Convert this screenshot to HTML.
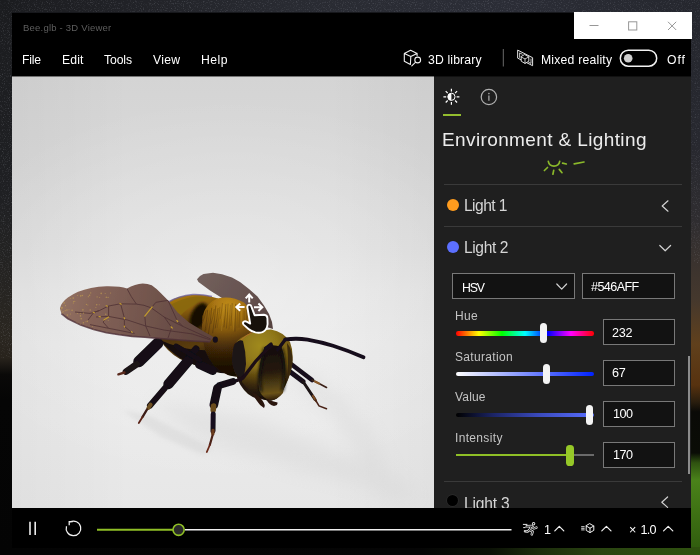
<!DOCTYPE html>
<html lang="en">
<head>
<meta charset="utf-8">
<title>Bee.glb - 3D Viewer</title>
<style>
html,body{margin:0;padding:0;}
body{width:700px;height:555px;position:relative;overflow:hidden;background:#1c1e23;font-family:"Liberation Sans",sans-serif;}
.a{position:absolute;}
.t{position:absolute;white-space:pre;line-height:1;will-change:transform;}
#desk-top{left:0;top:0;width:700px;height:13px;background:linear-gradient(90deg,#1b1c1f 0%,#212227 18%,#292b32 42%,#2b2d36 72%,#25272e 100%);}
#desk-left{left:0;top:0;width:13px;height:555px;background:linear-gradient(180deg,#1b1c1f 0%,#1f2023 35%,#252422 50%,#2a2620 60%,#28231c 64.5%,#0a0908 67.5%,#050505 72%,#040404 100%);}
#desk-right{left:690px;top:0;width:10px;height:555px;background:linear-gradient(180deg,#25272e 0%,#27282f 25%,#2f2d30 40%,#45382d 54%,#60401c 62%,#57320f 69.4%,#2a1e0e 72.4%,#0a0a07 74.2%,#0a0c06 81.6%,#2f5210 83.4%,#4a821a 86.5%,#3f7214 92%,#2f5a0e 100%);}
#desk-bottom{left:0;top:547px;width:700px;height:8px;background:linear-gradient(90deg,#040404 0%,#050505 60%,#0b1106 70%,#1c2d0c 77%,#2a4511 86%,#2f520f 100%);}
#win{left:12px;top:12px;width:679px;height:536px;background:#000;}
#caption{left:574px;top:12px;width:117.5px;height:27px;background:#fff;}
#view{left:12px;top:76px;width:422px;height:432px;overflow:hidden;background:
radial-gradient(ellipse 70% 45% at 52% 50%,rgba(255,255,255,.32) 0%,rgba(255,255,255,0) 100%),
linear-gradient(90deg,rgba(0,0,0,.035) 0%,rgba(0,0,0,0) 28%,rgba(0,0,0,0) 75%,rgba(0,0,0,.03) 100%),
linear-gradient(180deg,#d4d4d4 0%,#d9d9d9 22%,#dfdfdf 40%,#e5e5e5 50%,#e9e9e9 62%,#eaeaea 80%,#e7e7e7 100%);}
#panel{left:434px;top:76px;width:257px;height:432px;background:#1f1f1f;overflow:hidden;}
#bar{left:12px;top:508px;width:679px;height:40px;background:#000;}
.box{position:absolute;box-sizing:border-box;border:1px solid #787878;background:#121212;}
.div{position:absolute;height:1px;background:#3a3a3a;}
</style>
</head>
<body>
<div class="a" id="desk-top"></div>
<div class="a" id="desk-left"></div>
<div class="a" id="desk-right"></div>
<div class="a" id="desk-bottom"></div>
<svg class="a" style="left:0;top:0" width="700" height="555" viewBox="0 0 700 555">
<defs><filter id="stars" x="0" y="0" width="100%" height="100%"><feTurbulence type="fractalNoise" baseFrequency="0.85" numOctaves="2" seed="7"/><feColorMatrix type="matrix" values="0 0 0 0 0.85  0 0 0 0 0.88  0 0 0 0 1  1.6 0 0 0 -0.86"/></filter></defs>
<rect x="0" y="0" width="700" height="13" filter="url(#stars)" opacity="0.3"/>
<rect x="0" y="13" width="13" height="345" filter="url(#stars)" opacity="0.3"/>
<rect x="690" y="13" width="10" height="250" filter="url(#stars)" opacity="0.25"/>
</svg>
<div class="a" id="win"></div>
<div class="a" style="left:12px;top:12px;width:562px;height:1px;background:rgba(38,40,47,0.6)"></div>
<div class="a" id="caption"></div>
<div class="a" id="view">
<svg class="a" style="left:0;top:0" width="422" height="432" viewBox="12 76 422 432">
<defs>
<filter id="soft" x="-5%" y="-5%" width="110%" height="110%"><feGaussianBlur stdDeviation="0.55"/></filter>
<filter id="blur8" x="-30%" y="-30%" width="160%" height="160%"><feGaussianBlur stdDeviation="9"/></filter>
<filter id="blur15" x="-30%" y="-30%" width="160%" height="160%"><feGaussianBlur stdDeviation="1.6"/></filter>
<filter id="blur3" x="-30%" y="-30%" width="160%" height="160%"><feGaussianBlur stdDeviation="2.5"/></filter>
<linearGradient id="wingN" x1="60" y1="300" x2="213" y2="338" gradientUnits="userSpaceOnUse">
<stop offset="0" stop-color="#937262"/><stop offset="0.22" stop-color="#846257"/><stop offset="0.55" stop-color="#72554d"/><stop offset="1" stop-color="#5d423c"/>
</linearGradient>
<linearGradient id="wingF" x1="198" y1="276" x2="272" y2="325" gradientUnits="userSpaceOnUse">
<stop offset="0" stop-color="#72605c"/><stop offset="0.6" stop-color="#66524f"/><stop offset="1" stop-color="#564340"/>
</linearGradient>
<radialGradient id="thor" cx="229" cy="307" r="60" gradientUnits="userSpaceOnUse">
<stop offset="0" stop-color="#c4901c"/><stop offset="0.25" stop-color="#aa7612"/><stop offset="0.5" stop-color="#82560c"/><stop offset="0.78" stop-color="#503208"/><stop offset="1" stop-color="#2a1a06"/>
</radialGradient>
<linearGradient id="abd" x1="178" y1="296" x2="196" y2="364" gradientUnits="userSpaceOnUse">
<stop offset="0" stop-color="#a87810"/><stop offset="0.22" stop-color="#8a5e0e"/><stop offset="0.45" stop-color="#4a300a"/><stop offset="0.75" stop-color="#5a3c0c"/><stop offset="1" stop-color="#1c1206"/>
</linearGradient>
<radialGradient id="head" cx="260" cy="346" r="52" gradientUnits="userSpaceOnUse">
<stop offset="0" stop-color="#a08a1e"/><stop offset="0.35" stop-color="#8e7619"/><stop offset="0.65" stop-color="#6a5010"/><stop offset="1" stop-color="#241808"/>
</radialGradient>
<linearGradient id="clyp" x1="268" y1="345" x2="274" y2="401" gradientUnits="userSpaceOnUse">
<stop offset="0" stop-color="#120c0a"/><stop offset="0.48" stop-color="#261a10"/><stop offset="0.7" stop-color="#4c3c12"/><stop offset="0.86" stop-color="#6a5218"/><stop offset="1" stop-color="#241408"/>
</linearGradient>
<linearGradient id="headsh" x1="262" y1="368" x2="262" y2="401" gradientUnits="userSpaceOnUse">
<stop offset="0" stop-color="#1a1008" stop-opacity="0"/><stop offset="0.6" stop-color="#1a1008" stop-opacity="0.5"/><stop offset="1" stop-color="#140c06" stop-opacity="0.9"/>
</linearGradient>
<linearGradient id="thorsh" x1="215" y1="300" x2="235" y2="378" gradientUnits="userSpaceOnUse">
<stop offset="0" stop-color="#1a0e04" stop-opacity="0"/><stop offset="0.4" stop-color="#1a0e04" stop-opacity="0.12"/><stop offset="0.7" stop-color="#1a0e04" stop-opacity="0.55"/><stop offset="1" stop-color="#140a04" stop-opacity="0.9"/>
</linearGradient>
<clipPath id="thorclip"><path d="M202.5 316 Q206 303 217 298.5 Q231 295 244 302.5 Q254 311 256 330 Q257 355 248 372 Q240 379 228 375 Q212 368 205 350 Q200.5 330 202.5 316 Z"/></clipPath>
</defs>
<!-- shadow -->
<g filter="url(#blur8)" opacity="0.33">
<path d="M150 400 L260 420 L400 480 L420 500 L300 470 L200 440 Z" fill="#cfcfcf"/>
<path d="M300 370 Q370 400 400 500 L380 500 Q350 420 295 385 Z" fill="#d2d2d2"/>
</g>
<g filter="url(#blur3)" opacity="0.5"><path d="M122 410 L150 416 L212 448 L204 455 L160 436 Z" fill="#d4d4d4"/></g>
<g filter="url(#soft)">
<!-- far wing -->
<path d="M197 279.3 L200 276 L203.5 274 L213 272.8 L222 274.2 L232 277.6 L240 282 L249 289 L257.5 296.5 L264 305.5 L269 314 L272 322 L273 329 L250 322 L222 298 L210 290.5 L198.5 282 Z" fill="url(#wingF)"/>
<!-- right side legs -->
<g stroke-linecap="round" fill="none">
<path d="M291 364 L312 380" stroke="#16101a" stroke-width="4.6"/>
<path d="M312 380 L319 383.5 L326.5 387.5" stroke="#3a2018" stroke-width="1.6"/>
<path d="M315 381.5 L319 383.5" stroke="#8a5a2a" stroke-width="2"/>
<path d="M289 371 L303 381.5" stroke="#16101a" stroke-width="5"/>
<path d="M303 381.5 L315 399.5" stroke="#1c1216" stroke-width="3"/>
<path d="M313 396 L316 401" stroke="#7a4a22" stroke-width="2.2"/>
<path d="M315.5 400 L319 406 L326.5 408.8" stroke="#4a2418" stroke-width="1.5"/>
</g>
<!-- abdomen -->
<path d="M165 306 Q169 300 178.7 296.9 Q192 293.6 207 295.4 L218 298.5 L218 332 L213 367 Q196 367 180 359 Q166 351 160 339 Q158 318 165 306 Z" fill="url(#abd)"/>
<path d="M168.5 302 Q178 296.2 192.8 294.5 Q202 294.2 212 296.6" stroke="#6a5c9c" stroke-width="1.5" fill="none" opacity="0.75"/>
<path d="M171 304.5 Q183 298 196 296.6 Q203 296.5 209 298.2 Q199 301 190 307.5 Q183 312 178 318 Q173 311 171 304.5 Z" fill="#8a680f" opacity="0.9"/>
<g filter="url(#blur15)"><ellipse cx="199" cy="316" rx="8" ry="14" transform="rotate(24 199 316)" fill="#140e06"/></g>
<!-- underside dark -->
<path d="M160 340 Q185 352 215 350 L232 372 Q222 376 205 368 Q178 362 160 340 Z" fill="#181008"/>
<!-- hind leg -->
<g stroke-linecap="round" fill="none">
<path d="M157.5 343.5 L139 361.5" stroke="#120e14" stroke-width="11.5"/>
<path d="M137 364 L126 371.6" stroke="#1a1216" stroke-width="6.6"/>
<path d="M124.5 372.5 L118.4 374.3" stroke="#5a2a1c" stroke-width="2.4"/>
<!-- middle leg -->
<path d="M196 349 L188.5 358" stroke="#120e14" stroke-width="7"/>
<path d="M188 361 L168.5 384" stroke="#120e14" stroke-width="10.4"/>
<path d="M165 388 L150 405.5" stroke="#140f12" stroke-width="6"/>
<path d="M150.6 404.6 L148.4 408" stroke="#6e5020" stroke-width="4"/>
<path d="M147 409.5 L142.5 417" stroke="#3a1a14" stroke-width="2.4"/><path d="M142.5 417 L138.8 423" stroke="#5a2418" stroke-width="1.8"/>
<!-- coxa pieces -->
<path d="M199.5 364.5 L212.5 370.5" stroke="#120e14" stroke-width="9"/>
<path d="M176 346 L200 360" stroke="#120e14" stroke-width="5"/>
</g>
<!-- thorax -->
<path d="M202.5 316 Q206 303 217 298.5 Q231 295 244 302.5 Q254 311 256 330 Q257 355 248 372 Q240 379 228 375 Q212 368 205 350 Q200.5 330 202.5 316 Z" fill="url(#thor)"/>
<g clip-path="url(#thorclip)"><path d="M203.7 313.0 q-1.4 10.0 -4.7 19.9" stroke="#2a1804" stroke-opacity="0.35" stroke-width="0.9" fill="none"/><path d="M206.2 310.2 q-1.3 7.1 -4.4 14.2" stroke="#2a1804" stroke-opacity="0.35" stroke-width="0.9" fill="none"/><path d="M207.7 309.9 q-1.3 15.0 -4.2 29.9" stroke="#2a1804" stroke-opacity="0.35" stroke-width="0.9" fill="none"/><path d="M210.0 310.3 q-1.2 10.2 -3.9 20.4" stroke="#5a3a08" stroke-opacity="0.35" stroke-width="0.9" fill="none"/><path d="M211.7 307.8 q-1.1 14.4 -3.7 28.8" stroke="#2a1804" stroke-opacity="0.35" stroke-width="0.9" fill="none"/><path d="M214.3 309.0 q-1.0 7.5 -3.4 15.0" stroke="#3a2406" stroke-opacity="0.35" stroke-width="0.9" fill="none"/><path d="M215.8 305.5 q-1.0 13.9 -3.2 27.8" stroke="#2a1804" stroke-opacity="0.35" stroke-width="0.9" fill="none"/><path d="M218.1 308.2 q-0.9 10.1 -2.9 20.2" stroke="#2a1804" stroke-opacity="0.35" stroke-width="0.9" fill="none"/><path d="M219.9 306.8 q-0.8 10.6 -2.7 21.1" stroke="#5a3a08" stroke-opacity="0.35" stroke-width="0.9" fill="none"/><path d="M222.5 303.1 q-0.7 8.1 -2.4 16.2" stroke="#5a3a08" stroke-opacity="0.35" stroke-width="0.9" fill="none"/><path d="M223.7 304.5 q-0.7 13.2 -2.3 26.5" stroke="#d8a62a" stroke-opacity="0.3" stroke-width="0.9" fill="none"/><path d="M225.9 304.2 q-0.6 11.6 -2.0 23.2" stroke="#2a1804" stroke-opacity="0.35" stroke-width="0.9" fill="none"/><path d="M228.1 303.6 q-0.5 12.5 -1.7 24.9" stroke="#3a2406" stroke-opacity="0.35" stroke-width="0.9" fill="none"/><path d="M230.4 304.9 q-0.4 12.4 -1.5 24.7" stroke="#5a3a08" stroke-opacity="0.35" stroke-width="0.9" fill="none"/><path d="M232.2 303.1 q-0.4 11.3 -1.3 22.7" stroke="#3a2406" stroke-opacity="0.35" stroke-width="0.9" fill="none"/><path d="M234.3 303.5 q-0.3 13.7 -1.0 27.3" stroke="#d8a62a" stroke-opacity="0.3" stroke-width="0.9" fill="none"/><path d="M235.7 303.9 q-0.2 13.8 -0.8 27.7" stroke="#2a1804" stroke-opacity="0.35" stroke-width="0.9" fill="none"/><path d="M237.5 307.7 q-0.2 10.3 -0.6 20.6" stroke="#5a3a08" stroke-opacity="0.35" stroke-width="0.9" fill="none"/><path d="M239.4 307.1 q-0.1 10.3 -0.4 20.6" stroke="#3a2406" stroke-opacity="0.35" stroke-width="0.9" fill="none"/><path d="M241.5 308.8 q-0.0 7.4 -0.1 14.7" stroke="#d8a62a" stroke-opacity="0.3" stroke-width="0.9" fill="none"/><path d="M244.1 310.9 q0.1 9.2 0.2 18.5" stroke="#5a3a08" stroke-opacity="0.35" stroke-width="0.9" fill="none"/><path d="M246.6 309.3 q0.1 7.6 0.5 15.2" stroke="#3a2406" stroke-opacity="0.35" stroke-width="0.9" fill="none"/><path d="M248.5 312.9 q0.2 9.3 0.7 18.7" stroke="#d8a62a" stroke-opacity="0.3" stroke-width="0.9" fill="none"/><path d="M249.6 310.1 q0.2 13.9 0.8 27.9" stroke="#d8a62a" stroke-opacity="0.3" stroke-width="0.9" fill="none"/><path d="M251.8 311.4 q0.3 13.9 1.1 27.8" stroke="#2a1804" stroke-opacity="0.35" stroke-width="0.9" fill="none"/><path d="M254.0 313.8 q0.4 12.2 1.4 24.3" stroke="#3a2406" stroke-opacity="0.35" stroke-width="0.9" fill="none"/></g>
<path d="M202.5 316 Q206 303 217 298.5 Q231 295 244 302.5 Q254 311 256 330 Q257 355 248 372 Q240 379 228 375 Q212 368 205 350 Q200.5 330 202.5 316 Z" fill="url(#thorsh)"/>
<!-- near wing -->
<path d="M59.9 308.4 Q60.6 305 62.7 302.6 Q65 299.6 67.9 297.5 Q72.5 294.2 78.1 291.7 Q84 289.4 91 287.9 Q98.5 286.6 106.4 286.3 Q113.5 286.2 119.3 286.8 Q124 287.4 127 288.5 Q130.8 286 135 284.9 Q139 283.5 142.7 283.4 Q147.8 283.5 151.7 285.3 Q156.5 288.6 160.7 293 L168.4 300.7 L177.4 312.3 L189 322.6 L201.8 330.3 L213.6 337 L210 342 L186.4 340.6 L160.7 338.6 L145 337.3 L132.1 336.4 L119.3 334.8 L106.4 332.8 L93.6 329.6 L80.7 325.1 L67.9 318.7 L61.4 313.6 Z" fill="url(#wingN)"/>
<path d="M61.4 313.6 L67.9 318.7 L80.7 325.1 L93.6 329.6 L106.4 332.8 L119.3 334.8 L132.1 336.4 L145 337.3 L160.7 338.6 L186.4 340.6 L210 342" stroke="#4e3038" stroke-width="1.6" fill="none" opacity="0.8"/>
<!-- wing veins -->
<g stroke="#4a2c30" stroke-width="0.9" fill="none" opacity="0.8" stroke-linejoin="round">
<path d="M210.7 339 L182.9 326.4 L164.3 317.1 L151.3 307.9 Q144 304.6 136.4 304.1 L120.6 303.8 L108.6 306 L99.3 310.6 L90 313.4"/>
<path d="M210.7 340 L192.1 333.9 L164.3 330.1 L145.7 326 L127.1 319.9 L108.6 316.4 L96 317"/>
<path d="M151.3 307.9 L144.8 316.2 L145.7 326 L150 336"/>
<path d="M164.3 317.1 L171.7 327.4 L168 338"/>
<path d="M182.9 326.4 L177.3 320.9 L168 300.4"/>
<path d="M151.3 307.9 L155.9 302.3 L168 300.4"/>
<path d="M127.1 288.8 Q131 297 136.4 304.1"/>
<path d="M120.6 303.8 L124.4 318.1 L124.4 326.4 L131.8 332.5"/>
<path d="M108.6 306 L108.6 316.4 L103 322 L108.6 328.3 L134.6 333.4"/>
<path d="M99.3 310.6 L93.7 312.5 L88 320"/>
<path d="M75 312 L90 313.4"/>
<path d="M90 324.6 L108.6 328.3"/>
</g>
<g stroke="#d0a82c" stroke-width="1.2" fill="none" opacity="0.9" stroke-linecap="round">
<path d="M152.2 306.9 L148.6 311.4 L144.8 316.2"/>
<path d="M103.9 319.9 L108.6 317.1"/>
<path d="M120 303.4 L121.2 304.2 M106.2 305.8 L107.4 306.2 M124.2 317.6 L124.6 318.8 M124.3 326 L124.5 327 M131.4 331.6 L132.2 332.4 M171.2 326.8 L172.2 328 M176.8 320.4 L177.8 321.6 M93.2 312.3 L94.4 312.8 M99 316.5 L100.4 316.9"/>
</g>
<!-- speckles on wing tip -->
<clipPath id="wclip"><path d="M59.9 308.4 Q60.6 305 62.7 302.6 Q65 299.6 67.9 297.5 Q72.5 294.2 78.1 291.7 Q84 289.4 91 287.9 Q98.5 286.6 106.4 286.3 Q113.5 286.2 119.3 286.8 Q124 287.4 127 288.5 Q130.8 286 135 284.9 Q139 283.5 142.7 283.4 Q147.8 283.5 151.7 285.3 Q156.5 288.6 160.7 293 L168.4 300.7 L177.4 312.3 L189 322.6 L201.8 330.3 L213.6 337 L210 342 L186.4 340.6 L160.7 338.6 L145 337.3 L132.1 336.4 L119.3 334.8 L106.4 332.8 L93.6 329.6 L80.7 325.1 L67.9 318.7 L61.4 313.6 Z"/></clipPath>
<g fill="#c8a450" opacity="0.6" clip-path="url(#wclip)"><circle cx="70.4" cy="314.1" r="0.5"/><circle cx="65.8" cy="290.9" r="0.8"/><circle cx="81.2" cy="318.8" r="0.8"/><circle cx="69.0" cy="309.7" r="0.5"/><circle cx="62.8" cy="312.8" r="0.6"/><circle cx="77.6" cy="295.4" r="0.5"/><circle cx="97.1" cy="296.9" r="0.6"/><circle cx="62.5" cy="291.6" r="0.5"/><circle cx="61.0" cy="326.1" r="0.6"/><circle cx="82.4" cy="295.5" r="0.8"/><circle cx="74.8" cy="301.3" r="0.6"/><circle cx="99.7" cy="297.6" r="0.5"/><circle cx="61.6" cy="307.9" r="0.8"/><circle cx="89.5" cy="295.2" r="0.8"/><circle cx="80.6" cy="329.6" r="0.5"/><circle cx="93.7" cy="329.5" r="0.5"/><circle cx="83.5" cy="313.2" r="0.6"/><circle cx="80.7" cy="296.0" r="0.8"/><circle cx="73.4" cy="303.0" r="0.6"/><circle cx="67.5" cy="322.8" r="0.5"/><circle cx="105.2" cy="293.6" r="0.5"/><circle cx="70.7" cy="327.4" r="0.5"/><circle cx="85.6" cy="289.0" r="0.5"/><circle cx="73.2" cy="298.1" r="0.8"/><circle cx="86.0" cy="327.0" r="0.5"/><circle cx="67.4" cy="315.1" r="0.8"/><circle cx="92.3" cy="326.4" r="0.5"/><circle cx="99.2" cy="304.7" r="0.5"/><circle cx="64.1" cy="302.9" r="0.8"/><circle cx="110.6" cy="293.0" r="0.6"/><circle cx="68.2" cy="287.8" r="0.6"/><circle cx="62.1" cy="307.7" r="0.8"/><circle cx="76.9" cy="290.1" r="0.6"/><circle cx="80.5" cy="313.2" r="0.5"/><circle cx="65.6" cy="298.1" r="0.6"/><circle cx="65.3" cy="288.3" r="0.8"/><circle cx="65.5" cy="328.2" r="0.5"/><circle cx="61.6" cy="316.2" r="0.5"/><circle cx="86.4" cy="304.4" r="0.6"/><circle cx="71.1" cy="321.7" r="0.5"/><circle cx="90.7" cy="292.9" r="0.6"/><circle cx="63.1" cy="329.2" r="0.5"/><circle cx="66.8" cy="326.8" r="0.6"/><circle cx="80.5" cy="315.9" r="0.8"/><circle cx="84.1" cy="288.4" r="0.8"/><circle cx="63.1" cy="311.5" r="0.6"/><circle cx="70.7" cy="298.5" r="0.5"/><circle cx="66.9" cy="310.0" r="0.8"/><circle cx="95.9" cy="307.4" r="0.5"/><circle cx="88.3" cy="296.7" r="0.6"/><circle cx="96.7" cy="304.7" r="0.8"/><circle cx="80.8" cy="295.5" r="0.5"/><circle cx="80.2" cy="324.8" r="0.6"/><circle cx="71.4" cy="322.2" r="0.8"/><circle cx="108.1" cy="297.4" r="0.6"/><circle cx="65.2" cy="310.7" r="0.6"/><circle cx="85.9" cy="321.8" r="0.5"/><circle cx="82.9" cy="309.9" r="0.8"/><circle cx="101.2" cy="293.4" r="0.8"/><circle cx="83.4" cy="322.7" r="0.8"/><circle cx="76.9" cy="323.3" r="0.8"/><circle cx="90.2" cy="310.0" r="0.8"/><circle cx="61.3" cy="310.1" r="0.5"/><circle cx="87.3" cy="321.4" r="0.8"/><circle cx="67.2" cy="294.2" r="0.8"/><circle cx="73.6" cy="301.6" r="0.6"/><circle cx="87.8" cy="305.0" r="0.5"/><circle cx="108.2" cy="320.5" r="0.5"/><circle cx="62.8" cy="287.5" r="0.6"/><circle cx="77.4" cy="313.6" r="0.5"/><circle cx="105.8" cy="314.2" r="0.8"/><circle cx="72.1" cy="310.3" r="0.8"/><circle cx="106.3" cy="297.3" r="0.8"/><circle cx="65.5" cy="305.7" r="0.6"/><circle cx="71.2" cy="321.4" r="0.5"/><circle cx="71.2" cy="326.2" r="0.6"/></g>
<!-- wing root -->
<ellipse cx="215.3" cy="339.6" rx="2.6" ry="3.2" fill="#14101a"/>
<!-- head -->
<path d="M232 356 Q233 343 241 338 Q254 330 271 329.5 Q284 332 290 342 Q294 352 292 366 Q289 380 282 392 Q277 400 271 400.5 Q262 400.5 255 395 Q244 387 237 377 Q232 366 232 356 Z" fill="url(#head)"/>
<path d="M232 356 Q233 343 241 338 Q254 330 271 329.5 Q284 332 290 342 Q294 352 292 366 Q289 380 282 392 Q277 400 271 400.5 Q262 400.5 255 395 Q244 387 237 377 Q232 366 232 356 Z" fill="url(#headsh)"/>
<!-- left eye -->
<path d="M234.5 344 Q240 338.5 243 341 Q246 352 246 364 Q245 374 241.5 383 Q234 374 232 362 Q231.5 352 234.5 344 Z" fill="#1e1216"/>
<path d="M241 340 Q246 335 252 332.5" stroke="#c06a30" stroke-width="1" fill="none" opacity="0.7"/>
<!-- right eye -->
<path d="M287 343 Q292.5 350 292.5 360 Q292 372 287 381 Q289 365 287 343Z" fill="#3a2a10"/>
<!-- clypeus -->
<path d="M264.5 347 Q272 343.5 281.5 347 Q285.5 358 285.5 371 Q285 384 283 393 Q277 400.5 270 400.5 Q262.5 398 259.5 391 Q257.5 381 258.6 373 Q260.5 357 264.5 347 Z" fill="url(#clyp)"/>
<g filter="url(#blur15)" opacity="0.85"><path d="M264.8 348 Q261 360 259.6 374 Q259 384 261 392" stroke="#100a08" stroke-width="3" fill="none"/><path d="M281.5 348 Q285 360 284.6 374 Q284 384 282.4 391" stroke="#100a08" stroke-width="3" fill="none"/></g>
<!-- head lower dark -->
<path d="M236 374 Q246 390 262 399 Q256 400 248 394 Q239 386 236 374Z" fill="#22140a"/>
<!-- mouthparts -->
<g fill="#2a1410">
<path d="M252 392 Q258 394 262 400 Q266 405 264 408 Q260 406 257 401 Q254 397 252 392Z"/>
<path d="M266 399 Q272 401 277.5 402.5 Q278 405.5 274 406 Q269 405 266 399Z"/>
</g>
<!-- antennae -->
<g stroke-linecap="round" stroke-linejoin="round" fill="none">
<path d="M277.5 350 L285.3 339.6" stroke="#18101a" stroke-width="3.4"/>
<path d="M285.3 339.4 Q297 338 307.5 339.6 Q321 342 333 345.8 Q349 351 363.5 357.2" stroke="#18101a" stroke-width="3.8"/>
<path d="M271.5 345.5 Q262 354 255.5 361.5 Q249 370 243 378 Q237 381 230.5 382" stroke="#1a1016" stroke-width="3.3"/>
<path d="M266 348 L271 344" stroke="#18101a" stroke-width="3.4"/>
</g>
<!-- front leg -->
<g stroke-linecap="round" fill="none">
<path d="M233 381.5 L219.5 385.5" stroke="#120e14" stroke-width="6.6"/>
<path d="M217.5 388 L213.8 405" stroke="#120e14" stroke-width="8.6"/>
<path d="M213.5 406 L213.2 410" stroke="#6a4c1c" stroke-width="5.6"/>
<path d="M213.2 414 L213 431" stroke="#18101a" stroke-width="5"/>
<path d="M213 430.5 L212.8 434" stroke="#6a3a1c" stroke-width="3.4"/>
<path d="M212.5 435.5 L209.8 445" stroke="#4a2016" stroke-width="2.2"/><path d="M209.8 445 L206.8 452" stroke="#6a2a1a" stroke-width="1.8"/>
</g>
</g>
<!-- cursor -->
<g stroke="#ffffff" stroke-width="2" fill="none" stroke-linecap="butt" stroke-linejoin="miter">
<path d="M249.2 302.4 V295.2 M245.7 298.4 L249.2 294.6 L252.7 298.4"/>
<path d="M244.6 307 H237 M240.2 303.4 L236.3 307 L240.2 310.7"/>
<path d="M254 307.2 H261.6 M258.4 303.6 L262.3 307.2 L258.4 310.9"/>
</g>
<path d="M247.3 307 Q247.5 304.7 249.3 304.6 Q251 304.7 251.5 306.8 L254.6 315.2 L264 314.7 Q267.3 315 267.4 318.2 L267.6 324 Q267 330 262.5 332.2 Q259 333.2 255.5 332.4 Q251 331.2 248.5 329 L243.6 324.6 Q242.3 323 243.6 321.8 Q245 320.8 246.6 321.7 L250.2 323.6 Z" fill="#17110b" stroke="#ffffff" stroke-width="1.9" stroke-linejoin="round"/>
</svg>

</div>
<div class="a" id="panel"></div>
<div class="a" style="left:12px;top:76px;width:679px;height:1px;background:rgba(0,0,0,0.45)"></div>
<!-- panel controls (absolute page coords) -->
<div class="a" style="left:443.3px;top:114px;width:17.6px;height:2px;background:#93bd2e"></div>
<div class="div" style="left:443.5px;top:184px;width:238px"></div>
<div class="div" style="left:443.5px;top:226px;width:238px"></div>
<div class="div" style="left:443.5px;top:481px;width:238px"></div>
<div class="a" style="left:447px;top:198.5px;width:12px;height:12px;border-radius:50%;background:#ff9c1e"></div>
<div class="a" style="left:447px;top:240.5px;width:12px;height:12px;border-radius:50%;background:#5c70ff"></div>
<div class="a" style="left:447px;top:495.4px;width:11px;height:11px;border-radius:50%;background:#000;box-shadow:0 0 0 0.7px #2c2c2c"></div>
<div class="box" style="left:452px;top:273px;width:123px;height:26px"></div>
<div class="box" style="left:582px;top:273px;width:93px;height:26px"></div>
<div class="box" style="left:603px;top:319px;width:72px;height:26px"></div>
<div class="box" style="left:603px;top:360px;width:72px;height:26px"></div>
<div class="box" style="left:603px;top:401px;width:72px;height:26px"></div>
<div class="box" style="left:603px;top:442px;width:72px;height:26px"></div>
<!-- sliders -->
<div class="a" style="left:455.5px;top:331px;width:138px;height:4.5px;border-radius:2.25px;background:linear-gradient(90deg,#ff0000 0%,#ffff00 16.6%,#00ff00 33.3%,#00ffff 50%,#0000ff 66.6%,#ff00ff 83.3%,#ff0000 100%)"></div>
<div class="a" style="left:540px;top:323px;width:7px;height:20px;border-radius:3.5px;background:#f4f4f4"></div>
<div class="a" style="left:455.5px;top:371.8px;width:138px;height:4.5px;border-radius:2.25px;background:linear-gradient(90deg,#ffffff 0%,#0022ff 100%)"></div>
<div class="a" style="left:543px;top:363.6px;width:7px;height:20px;border-radius:3.5px;background:#f4f4f4"></div>
<div class="a" style="left:455.5px;top:412.5px;width:138px;height:4.5px;border-radius:2.25px;background:linear-gradient(90deg,#000000 0%,#1c2568 28%,#3a4abc 60%,#586eff 100%)"></div>
<div class="a" style="left:586px;top:404.6px;width:7px;height:20px;border-radius:3.5px;background:#f4f4f4"></div>
<div class="a" style="left:455.5px;top:454px;width:138px;height:2px;background:#6a6a6a"></div>
<div class="a" style="left:455.5px;top:454px;width:112px;height:2.4px;background:#8fbf26"></div>
<div class="a" style="left:566.3px;top:445.2px;width:7.3px;height:20.4px;border-radius:3.6px;background:#96c828"></div>
<!-- scrollbar -->
<div class="a" style="left:688px;top:355.5px;width:2px;height:118.5px;background:#8c8c8c"></div>
<!-- icons svg overlay -->
<svg class="a" style="left:0;top:0" width="700" height="555" viewBox="0 0 700 555" fill="none">
<!-- caption buttons -->
<g stroke="#979797" stroke-width="1">
<line x1="589.5" y1="25.5" x2="598.5" y2="25.5"/>
<rect x="628.6" y="21.8" width="8.2" height="8.2"/>
<path d="M668 21.8 L676.2 30 M676.2 21.8 L668 30"/>
</g>
<!-- 3D library icon -->
<g stroke="#f0f0f0" stroke-width="1.1" stroke-linejoin="round" stroke-linecap="round">
<path d="M410.6 50.2 L417.1 53.4 L417.1 55.6 M410.6 50.2 L404.3 53.4 L404.3 61.2 L410.4 64.4 L410.8 56.4 L404.3 53.4 M410.8 56.4 L417.1 53.4"/>
<circle cx="417.7" cy="60" r="2.9"/>
<path d="M415.4 62.3 L411.8 65.9"/>
</g>
<line x1="503.3" y1="49" x2="503.3" y2="66.5" stroke="#6a6a6a" stroke-width="1"/>
<!-- mixed reality icon -->
<g stroke="#f0f0f0" stroke-width="0.95" stroke-linejoin="round" stroke-linecap="round">
<path d="M518 50.3 L532.6 57.7 L532.6 65.7 L518 58.3 Z"/>
<path d="M519.6 57.4 V52.9 L522.2 54.2 M531 59 V63.4 L528.6 62.2" stroke-width="0.8"/>
<path d="M525 54.7 L528.8 56.9 L528.8 61.2 L525 63.4 L521.2 61.2 L521.2 56.9 Z" fill="#000" stroke-width="0.9"/>
<path d="M521.2 56.9 L525 59 L528.8 56.9 M525 59 V63.4" stroke-width="0.8"/>
</g>
<!-- toggle -->
<rect x="620.3" y="50.2" width="36.4" height="16" rx="8" stroke="#f2f2f2" stroke-width="1.5"/>
<circle cx="628.2" cy="58.3" r="4.3" fill="#cfcfcf"/>
<!-- sun tab icon -->
<g stroke="#ffffff" stroke-width="1.2" stroke-linecap="butt" transform="translate(-0.6,0.2)">
<circle cx="452" cy="96.6" r="3.6" stroke-width="1"/>
<path d="M452 93 A3.6 3.6 0 0 0 452 100.2 Z" fill="#ffffff" stroke="none"/>
<path d="M452 88.6 V91.4 M452 101.8 V104.6 M444 96.6 H446.8 M457.2 96.6 H460 M446.3 90.9 L448.3 92.9 M455.7 100.3 L457.7 102.3 M446.3 102.3 L448.3 100.3 M455.7 92.9 L457.7 90.9"/>
</g>
<!-- info icon -->
<circle cx="488.9" cy="97" r="7.7" stroke="#b0b0b0" stroke-width="1.2"/>
<path d="M488.9 95.6 V100.8" stroke="#b0b0b0" stroke-width="1.2"/>
<circle cx="488.9" cy="93.6" r="0.8" fill="#b0b0b0"/>
<!-- green sun (clipped) -->
<g stroke="#8ab82a" stroke-width="1.7" stroke-linecap="round">
<path d="M548.3 161.3 A5.8 5.8 0 0 0 559.7 161.3"/>
<path d="M544.4 170.5 L547.5 167.5 M552.9 174.2 L553.7 170.4 M559.3 169.4 L562 172.7 M562.6 163.1 L566.3 164 M574.2 163.8 L584 162"/>
</g>
<!-- chevrons -->
<g stroke="#d2d2d2" stroke-width="1.2" stroke-linecap="round" stroke-linejoin="round">
<path d="M668 200.8 L662.2 206 L668 211.2"/>
<path d="M659.8 245.5 L665.2 250.8 L670.6 245.5"/>
<path d="M556.8 284 L561.7 289.2 L566.6 284"/>
<path d="M667.6 497 L661.8 502.2 L667.6 507.4"/>
</g>

</svg>
<div class="t" style="left:22.52px;top:22.56px;font-size:9.5px;letter-spacing:0.216px;color:#5e5e5e">Bee.glb - 3D Viewer</div>
<div class="t" style="left:22.01px;top:53.87px;font-size:12.2px;letter-spacing:-0.214px;color:#ffffff">File</div>
<div class="t" style="left:61.51px;top:53.87px;font-size:12.2px;letter-spacing:0.161px;color:#ffffff">Edit</div>
<div class="t" style="left:104.01px;top:53.87px;font-size:12.2px;letter-spacing:-0.113px;color:#ffffff">Tools</div>
<div class="t" style="left:152.51px;top:53.87px;font-size:12.2px;letter-spacing:0.266px;color:#ffffff">View</div>
<div class="t" style="left:200.51px;top:53.87px;font-size:12.2px;letter-spacing:0.474px;color:#ffffff">Help</div>
<div class="t" style="left:427.51px;top:53.87px;font-size:12.2px;letter-spacing:0.160px;color:#ffffff">3D library</div>
<div class="t" style="left:540.51px;top:53.87px;font-size:12.2px;letter-spacing:0.216px;color:#ffffff">Mixed reality</div>
<div class="t" style="left:666.51px;top:53.87px;font-size:12.2px;letter-spacing:0.977px;color:#ffffff">Off</div>
<div class="t" style="left:442.24px;top:130.42px;font-size:19px;letter-spacing:0.383px;color:#ececec">Environment &amp; Lighting</div>
<div class="t" style="left:463.88px;top:198.09px;font-size:15.6px;letter-spacing:-0.555px;color:#d6d6d6">Light 1</div>
<div class="t" style="left:463.88px;top:239.89px;font-size:15.6px;letter-spacing:-0.388px;color:#d6d6d6">Light 2</div>
<div class="t" style="left:462.11px;top:282.19px;font-size:12.3px;letter-spacing:-1.148px;color:#ffffff">HSV</div>
<div class="t" style="left:591.40px;top:280.53px;font-size:12.6px;letter-spacing:-0.585px;color:#ffffff">#546AFF</div>
<div class="t" style="left:455.02px;top:309.84px;font-size:12px;letter-spacing:0.392px;color:#c4c4c4">Hue</div>
<div class="t" style="left:612.20px;top:326.73px;font-size:12.6px;letter-spacing:-0.258px;color:#ffffff">232</div>
<div class="t" style="left:455.02px;top:350.64px;font-size:12px;letter-spacing:0.333px;color:#c4c4c4">Saturation</div>
<div class="t" style="left:612.20px;top:366.83px;font-size:12.6px;letter-spacing:-0.316px;color:#ffffff">67</div>
<div class="t" style="left:455.02px;top:391.44px;font-size:12px;letter-spacing:0.172px;color:#c4c4c4">Value</div>
<div class="t" style="left:612.90px;top:407.93px;font-size:12.6px;letter-spacing:-0.458px;color:#ffffff">100</div>
<div class="t" style="left:455.02px;top:432.24px;font-size:12px;letter-spacing:0.337px;color:#c4c4c4">Intensity</div>
<div class="t" style="left:612.90px;top:448.83px;font-size:12.6px;letter-spacing:-0.458px;color:#ffffff">170</div>
<div class="t" style="left:463.78px;top:495.59px;font-size:15.6px;letter-spacing:-0.171px;color:#d6d6d6">Light 3</div>
<div class="a" id="bar"></div>
<svg class="a" style="left:0;top:0" width="700" height="555" viewBox="0 0 700 555" fill="none">
<!-- pause -->
<path d="M30 521.8 V534.9 M35.2 521.8 V534.9" stroke="#ececec" stroke-width="1.6"/>
<!-- replay -->
<g stroke="#f2f2f2" stroke-width="1.25" stroke-linecap="butt" stroke-linejoin="miter">
<path d="M70.1 521.95 A7.3 7.3 0 1 1 66.5 526.3"/>
<path d="M69.2 525.2 V521.7 H72.8"/>
</g>
<!-- slider -->
<line x1="97" y1="529.8" x2="178" y2="529.8" stroke="#8fbf26" stroke-width="2"/>
<line x1="185" y1="529.8" x2="511.5" y2="529.8" stroke="#f0f0f0" stroke-width="1.4"/>
<circle cx="178.6" cy="529.8" r="5.6" fill="#2a2a2a" stroke="#8fbf26" stroke-width="1.6"/>
<!-- running man -->
<g stroke-linecap="round" stroke-linejoin="round">
<path d="M526.8 526.3 L531.4 526 L529.6 529.8 L532.6 531.6 L531.8 534.4 M529.6 529.8 L527.6 531.4 L525 531.2 M531.4 526 L534 528.4 L536.4 527.6" stroke="#e8e8e8" stroke-width="2.5"/>
<circle cx="533.6" cy="523.8" r="1.7" fill="#e8e8e8"/>
<path d="M526.8 526.3 L531.4 526 L529.6 529.8 L532.6 531.6 L531.8 534.4 M529.6 529.8 L527.6 531.4 L525 531.2 M531.4 526 L534 528.4 L536.4 527.6" stroke="#000" stroke-width="0.9"/>
<circle cx="533.6" cy="523.8" r="0.8" fill="#000"/>
<path d="M523.3 524.4 H527 M523.6 527.6 H525.2 M524.6 531.2 H526" stroke="#e8e8e8" stroke-width="1"/>
</g>
<!-- cube -->
<g stroke="#f2f2f2" stroke-width="1" stroke-linecap="round" stroke-linejoin="round">
<path d="M590 523.8 L593.8 526 L593.8 530.4 L590 532.6 L586.2 530.4 L586.2 526 Z M586.2 526 L590 528.2 L593.8 526 M590 528.2 V532.6"/>
<path d="M581.2 526.7 H584.6 M581.2 528.3 H584.6 M581.2 529.9 H584.6" stroke-width="0.9" stroke-linecap="butt"/>
</g>
<!-- up chevrons -->
<g stroke="#f2f2f2" stroke-width="1.2" stroke-linecap="round" stroke-linejoin="round">
<path d="M554.8 530.9 L559.3 526.3 L563.8 530.9"/>
<path d="M601.8 530.9 L606.4 526.3 L611 530.9"/>
<path d="M663.6 530.9 L668.2 526.3 L672.8 530.9"/>
</g>

</svg>
<div class="t" style="left:544.10px;top:524.03px;font-size:12.6px;letter-spacing:0.000px;color:#ffffff">1</div>
<div class="t" style="left:628.50px;top:524.03px;font-size:12.6px;letter-spacing:-0.844px;color:#ffffff;word-spacing:2.4px">× 1.0</div>
</body>
</html>
